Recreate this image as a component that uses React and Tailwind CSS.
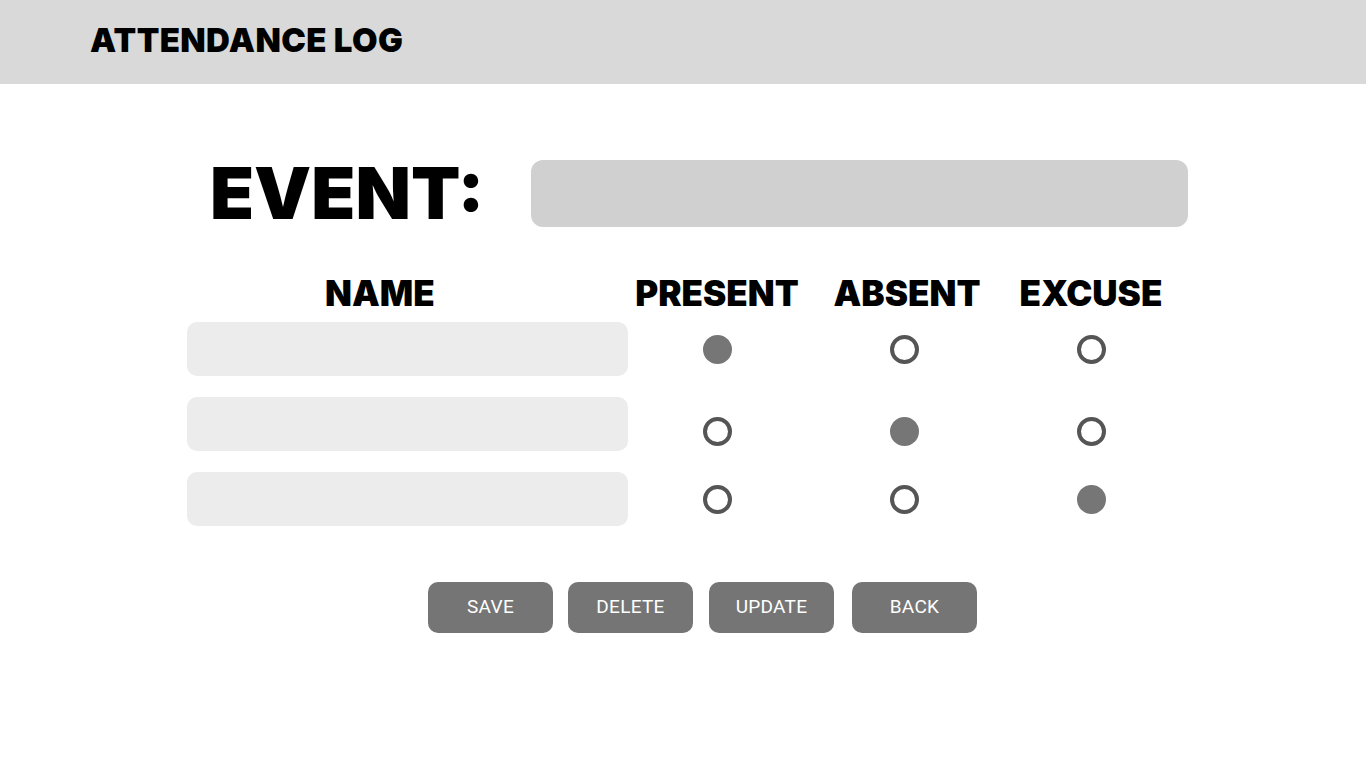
import React from "react";

const heavy = { fontFamily: "Inter, 'DejaVu Sans', sans-serif" };

function Radio({ filled }) {
  return filled ? (
    <div className="w-[29px] h-[29px] rounded-full bg-[#767676]" />
  ) : (
    <div className="w-[29px] h-[29px] rounded-full border-[4px] border-[#555555] bg-white" />
  );
}

const rows = [
  { sel: 0, shift: "" },
  { sel: 1, shift: "mt-[14px]" },
  { sel: 2, shift: "" },
];

const buttons = [
  { t: "SAVE", ml: "ml-[428px]" },
  { t: "DELETE", ml: "ml-[15px]" },
  { t: "UPDATE", ml: "ml-[16px]" },
  { t: "BACK", ml: "ml-[18px]" },
];

export default function App() {
  return (
    <div className="w-[1366px] h-[768px] bg-white overflow-hidden">
      <header className="h-[84px] bg-[#d9d9d9] flex items-center pl-[90px] pb-[4px]">
        <h1
          className="text-[33px] font-black text-black tracking-[0.4px] leading-none"
          style={heavy}
        >
          ATTENDANCE LOG
        </h1>
      </header>

      <div className="flex items-center pl-[210px] mt-[73px]">
        <div
          className="w-[321px] text-[72px] font-black leading-none text-black"
          style={heavy}
        >
          EVENT:
        </div>
        <div className="w-[657px] h-[67px] rounded-[12px] bg-[#d0d0d0]" />
      </div>

      <div className="ml-[187px] mt-[42px] grid grid-cols-[441px_178px_196px_178px] items-center">
        <div
          className="pl-[138px] text-[35px] font-black leading-none text-black h-[44px] flex items-center"
          style={heavy}
        >
          NAME
        </div>
        <div className="text-center text-[35px] font-black leading-none text-black" style={heavy}>
          PRESENT
        </div>
        <div className="text-center pl-[6px] text-[35px] font-black leading-none text-black" style={heavy}>
          ABSENT
        </div>
        <div className="text-center text-[35px] font-black leading-none text-black" style={heavy}>
          EXCUSE
        </div>
      </div>

      <div className="ml-[187px] mt-[7px] flex flex-col gap-[21px]">
        {rows.map((r, i) => (
          <div key={i} className="grid grid-cols-[441px_178px_196px_178px] items-center h-[54px]">
            <div className="w-[441px] h-[54px] rounded-[10px] bg-[#ececec]" />
            {[0, 1, 2].map((c) => (
              <div key={c} className={`flex justify-center ${r.shift}`}>
                <Radio filled={r.sel === c} />
              </div>
            ))}
          </div>
        ))}
      </div>

      <div
        className="flex mt-[56px]"
        style={{ fontFamily: "Roboto, 'Noto Sans', sans-serif" }}
      >
        {buttons.map((b) => (
          <button
            key={b.t}
            className={`${b.ml} w-[125px] h-[51px] rounded-[10px] bg-[#757575] text-white text-[19px] font-normal tracking-[0.3px] flex items-center justify-center`}
          >
            {b.t}
          </button>
        ))}
      </div>
    </div>
  );
}
